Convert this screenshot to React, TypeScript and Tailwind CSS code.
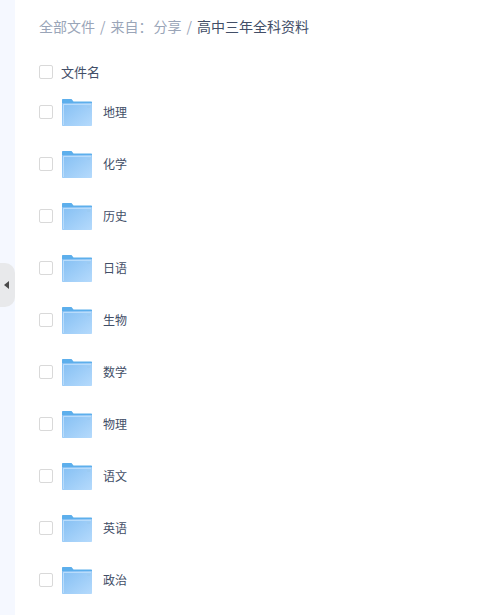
import React from 'react';

const folders = ['地理', '化学', '历史', '日语', '生物', '数学', '物理', '语文', '英语', '政治'];

const Checkbox: React.FC = () => (
    <span className="block w-[14px] h-[14px] shrink-0 border border-[#d9d9d9] rounded-[2px] bg-white" />
);

const FolderIcon: React.FC = () => (
    <svg width="30" height="27" viewBox="0 0 30 27" className="block shrink-0">
        <defs>
            <linearGradient id="folderFront" x1="0" y1="0" x2="1" y2="1">
                <stop offset="0" stopColor="#84bff3" />
                <stop offset="1" stopColor="#b5dafc" />
            </linearGradient>
        </defs>
        <path d="M0 1C0 .4.4 0 1 0h8.5l2 2.5H29c.6 0 1 .4 1 1V8H0z" fill="#5dafec" />
        <path d="M0 4h29c.6 0 1 .4 1 1v21c0 .6-.4 1-1 1H1c-.6 0-1-.4-1-1z" fill="url(#folderFront)" />
        <path d="M1 5h28v1H2v20H1z" fill="#b9dcfb" />
        <rect x="25" y="7" width="3" height="2" fill="#9ccbf3" />
    </svg>
);

const App: React.FC = () => {
    return (
        <div className="flex w-[480px] h-[615px] overflow-hidden bg-white font-['Noto_Sans_CJK_SC',sans-serif]">
            <div className="w-[15px] shrink-0 bg-[#f5f8ff] relative">
                <div className="absolute left-0 top-[263px] w-[15px] h-[44px] bg-[#e8e9eb] rounded-r-[10px] flex items-center justify-center">
                    <span className="block w-0 h-0 border-y-[4px] border-y-transparent border-r-[5px] border-r-[#4a4a4a] -ml-[3px]" />
                </div>
            </div>
            <div className="flex-1 pl-[24px]">
                <div className="flex items-center h-[20px] mt-[16px] text-[14px] leading-[20px] text-[#9aa5b8]">
                    <span>全部文件</span>
                    <span className="mx-[5px]">/</span>
                    <span>来自：</span>
                    <span className="ml-[1px]">分享</span>
                    <span className="mx-[5px]">/</span>
                    <span className="text-[#424e67]">高中三年全科资料</span>
                </div>
                <div className="flex items-center h-[20px] mt-[26px] gap-[8px] text-[13px] text-[#424e67]">
                    <Checkbox />
                    <span>文件名</span>
                </div>
                <div className="mt-[4px]">
                    {folders.map(name => (
                        <div key={name} className="flex items-center h-[52px] text-[12px] text-[#424e67]">
                            <Checkbox />
                            <span className="ml-[9px] mt-[1px]"><FolderIcon /></span>
                            <span className="ml-[11px]">{name}</span>
                        </div>
                    ))}
                </div>
            </div>
        </div>
    );
};

export default App;
